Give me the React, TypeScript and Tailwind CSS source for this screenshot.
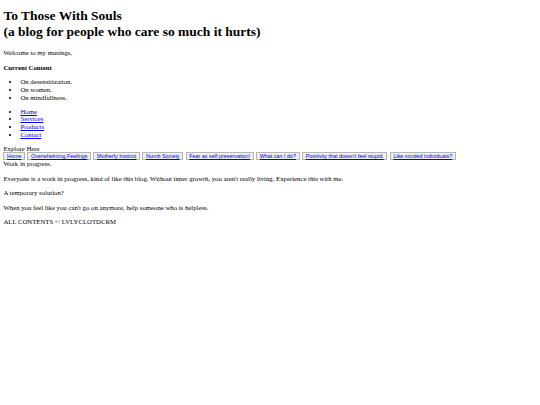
const topics = [
  "Home",
  "Overwhelming Feelings",
  "Motherly Instinct",
  "Numb Society",
  "Fear as self preservation!",
  "What can I do?",
  "Positivity that doesn't feel stupid.",
  "Like minded individuals?",
];

export default function App() {
  return (
    <div className="min-h-[405px] w-[540px] bg-white px-[3.4px] pt-[8px] font-['Liberation_Serif',serif] text-[6.75px] leading-[7.6px] text-black">
      <h1 className="text-[13.5px] font-bold leading-[16.3px]">
        To Those With Souls
        <br />
        (a blog for people who care so much it hurts)
      </h1>
      <p className="mt-[8.7px]">Welcome to my musings,</p>
      <p className="mt-[7.5px] font-bold">Current Content</p>
      <ul className="mt-[6.5px] list-disc pl-[17px]">
        <li>On desensitization.</li>
        <li>On women.</li>
        <li>On mindfullness.</li>
      </ul>
      <ul className="mt-[6.5px] list-disc pl-[17px]">
        {["Home", "Services", "Products", "Contact"].map((l) => (
          <li key={l}>
            <a href="#" className="text-[#0000ee] underline">
              {l}
            </a>
          </li>
        ))}
      </ul>
      <div className="mt-[6.7px]">Explore Here</div>
      <nav className="flex flex-wrap gap-[2.5px]">
        {topics.map((t) => (
          <button
            key={t}
            className="h-[8px] border border-[#b5b5b5] bg-[#efefef] px-[2.6px] font-['Liberation_Sans',Arial,sans-serif] text-[5.4px] leading-[6px]"
          >
            <a href="#" className="text-[#0000ee] underline">
              {t}
            </a>
          </button>
        ))}
      </nav>
      <div>Work in progress.</div>
      <p className="mt-[7px]">
        Everyone is a work in progress, kind of like this blog. Without inner growth, you aren't really living. Experience this with me.
      </p>
      <p className="mt-[6.8px]">A temporary solution?</p>
      <p className="mt-[7px]">When you feel like you can't go on anymore, help someone who is helpless.</p>
      <p className="mt-[6.8px]">ALL CONTENTS © LVLYCLOTDCRM</p>
    </div>
  );
}
